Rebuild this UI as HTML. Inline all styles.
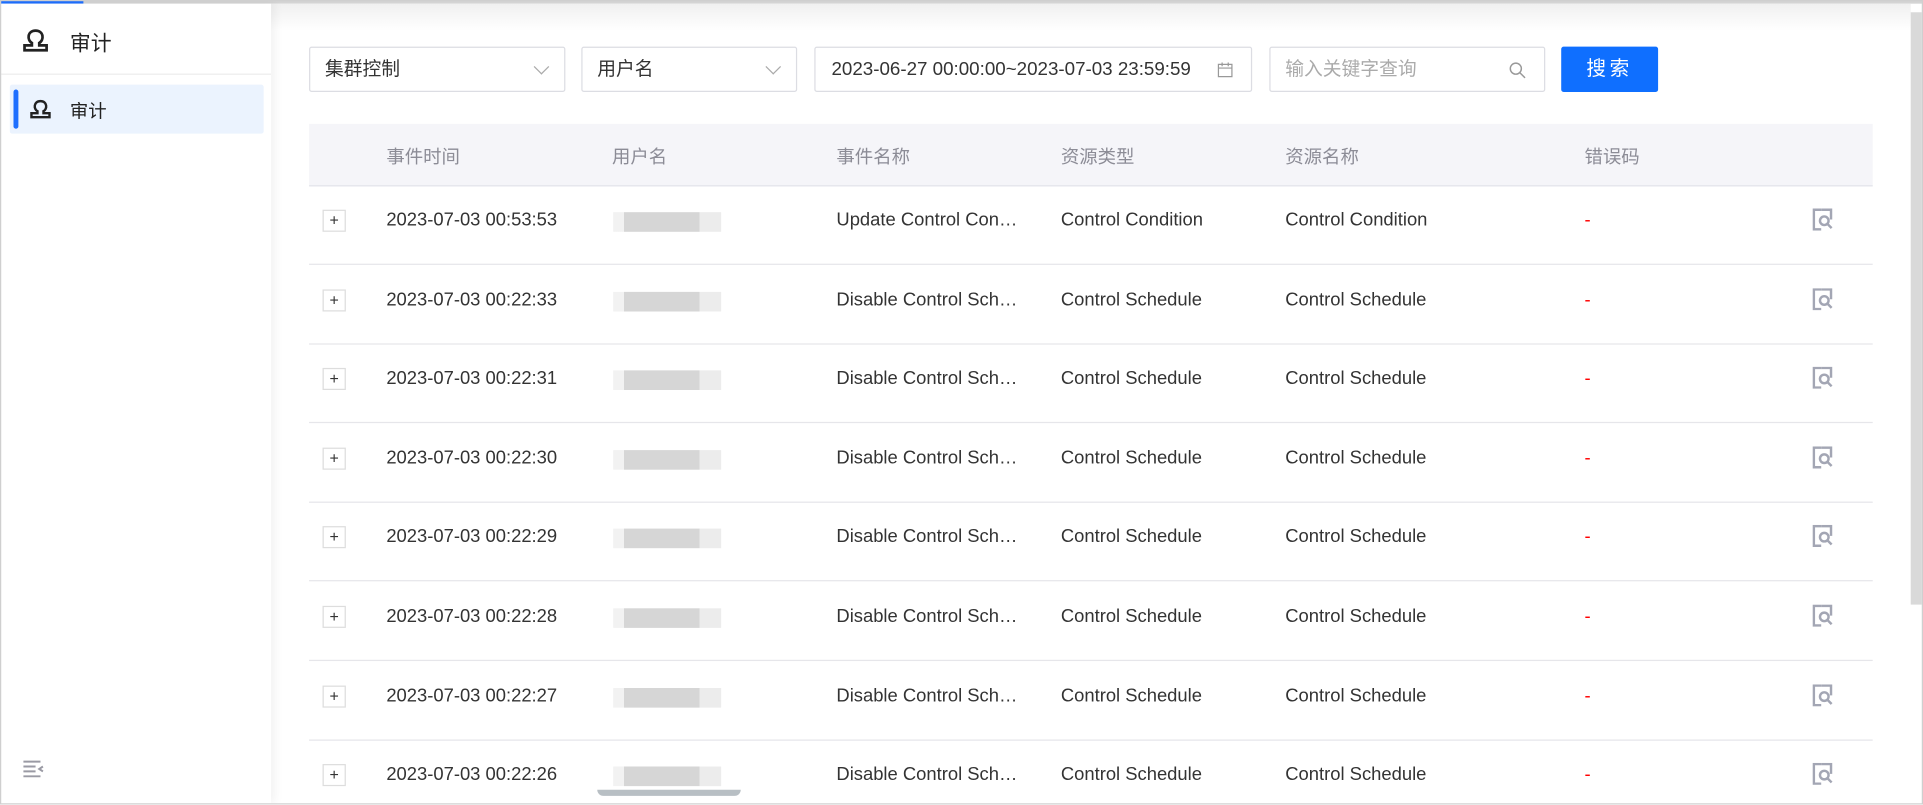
<!DOCTYPE html>
<html><head><meta charset="utf-8"><style>
html,body{margin:0;padding:0;width:1923px;height:804px;overflow:hidden;background:#fff}
#w{position:absolute;left:0;top:0;width:1568px;height:656px;overflow:hidden;transform:scale(1.22640);transform-origin:0 0;font-family:"Liberation Sans","Noto Sans CJK SC",sans-serif;color:#333;font-size:15px}
.a{position:absolute}
.sel{position:absolute;top:38px;height:37px;border:1px solid #dcdde3;border-radius:2px;box-sizing:border-box;background:#fff;line-height:36px;padding-left:12px;font-size:15.3px}
.chev{position:absolute;right:14px;top:11px;width:8px;height:8px;border-right:1px solid #aaa;border-bottom:1px solid #aaa;transform:rotate(45deg)}
.hd{position:absolute;top:101px;left:252px;width:1275px;height:50px;background:#f5f5f9;border-bottom:1px solid #e3e4ea;color:#8c8c96;font-size:15px}
.hd span,.row span{position:absolute}
.hd span{top:16px}
.row{position:absolute;left:252px;width:1275px;height:64px;border-bottom:1px solid #e6e6ea}
.row span{top:20px;white-space:nowrap}
.plus{left:11px;top:20px!important;width:19px;height:18px;border:1px solid #ddd;box-sizing:border-box;text-align:center;line-height:15px;font-size:13px}
.blur{left:248px;top:22px!important;width:88px;height:16px;background:linear-gradient(90deg,#f2f2f2 0 10%,#d6d6d6 10% 80%,#ececec 80%)}
.red{color:#f00}
</style></head><body><div id="w">
<div class="a" style="left:0;top:0;width:1568px;height:3px;background:#d4d4d4"></div>
<div class="a" style="left:0;top:0;width:68px;height:3px;background:#1e6fff"></div>
<div class="a" style="left:221px;top:3px;width:1337px;height:22px;background:linear-gradient(#f0f0f0,#fff)"></div>
<div class="a" style="left:1px;top:3px;width:220px;height:652px;background:#fff;box-shadow:3px 0 8px rgba(0,0,0,.06)"></div>
<svg class="a" style="left:18px;top:22px" width="22" height="22" viewBox="0 0 22 22"><path d="M8 13 C4 11 4 3 11 3 C18 3 18 11 14 13 L14 15 L20 15 L20 19 L2 19 L2 15 L8 15 Z" fill="none" stroke="#222" stroke-width="2.2"/></svg>
<div class="a" style="left:57px;top:21px;font-size:17px;color:#222">审计</div>
<div class="a" style="left:1px;top:60px;width:220px;height:1px;background:#ececec"></div>
<div class="a" style="left:8px;top:69px;width:207px;height:40px;background:#ebf3fe;border-radius:2px"></div>
<div class="a" style="left:11px;top:73px;width:4px;height:32px;background:#1e6fff;border-radius:2px"></div>
<svg class="a" style="left:24px;top:80px" width="18" height="18" viewBox="0 0 22 22"><path d="M8 13 C4 11 4 3 11 3 C18 3 18 11 14 13 L14 15 L20 15 L20 19 L2 19 L2 15 L8 15 Z" fill="none" stroke="#222" stroke-width="2.4"/></svg>
<div class="a" style="left:57px;top:80px;font-size:15px;color:#222">审计</div>
<svg class="a" style="left:19px;top:619px" width="18" height="16" viewBox="0 0 18 16"><path d="M0 2H14M0 6H10M0 10H10M0 14H14M16 6L13 8L16 10" fill="none" stroke="#9a9aa4" stroke-width="1.6"/></svg>

<div class="sel" style="left:252px;width:209px">集群控制<i class="chev"></i></div>
<div class="sel" style="left:474px;width:176px">用户名<i class="chev"></i></div>
<div class="sel" style="left:664px;width:357px;padding-left:13px">2023-06-27 00:00:00~2023-07-03 23:59:59
<svg class="a" style="right:14px;top:11px" width="14" height="14" viewBox="0 0 14 14"><path d="M1.5 2.5H12.5V12.5H1.5ZM1.5 5.5H12.5M4.5 1V4M9.5 1V4" fill="none" stroke="#999" stroke-width="1"/></svg></div>
<div class="sel" style="left:1035px;width:225px;color:#aaa">输入关键字查询
<svg class="a" style="right:14px;top:11px" width="15" height="15" viewBox="0 0 15 15"><circle cx="6" cy="6" r="4.5" fill="none" stroke="#999" stroke-width="1.2"/><path d="M9.5 9.5L13.5 13.5" stroke="#999" stroke-width="1.2"/></svg></div>
<div class="a" style="left:1273px;top:38px;width:79px;height:37px;background:#0f6fff;border-radius:2px;color:#fff;text-align:center;line-height:37px;font-size:16px;letter-spacing:3px">搜索</div>

<div class="hd"><span style="left:63px">事件时间</span><span style="left:247px">用户名</span><span style="left:430px">事件名称</span><span style="left:613px">资源类型</span><span style="left:796px">资源名称</span><span style="left:1040px">错误码</span></div>

<div id="rows"></div>
<div class="a" style="left:1558px;top:10px;width:9px;height:483px;background:#d9d9d9"></div>
<div class="a" style="left:487px;top:644px;width:117px;height:5px;background:#b8bfc4;border-radius:0 0 40px 40px"></div>
<div class="a" style="left:0;top:0;width:1568px;height:656px;border:1px solid #cfcfcf;box-sizing:border-box"></div>
</div>
<script>
var t=["00:53:53","00:22:33","00:22:31","00:22:30","00:22:29","00:22:28","00:22:27","00:22:26"],h="";
for(var i=0;i<8;i++){var y=151+i*64.6;var up=i==0;var ev=up?"Update Control Con…":"Disable Control Sch…";var r=up?"Control Condition":"Control Schedule";
h+='<div class="row" style="top:'+y+'px"><span class="plus">+</span><span style="left:63px">2023-07-03 '+t[i]+'</span><span class="blur"></span><span style="left:430px">'+ev+'</span><span style="left:613px">'+r+'</span><span style="left:796px">'+r+'</span><span class="red" style="left:1040px">-</span>'+
'<svg style="position:absolute;left:1226px;top:19px" width="17" height="18" viewBox="0 0 17 18"><path d="M7 1H1V17H7" fill="none" stroke="#a3a6b4" stroke-width="2"/><path d="M7 1H15V9" fill="none" stroke="#a3a6b4" stroke-width="2"/><circle cx="9.5" cy="10" r="3.5" fill="none" stroke="#a3a6b4" stroke-width="2"/><path d="M12 12.5L15.5 16" stroke="#a3a6b4" stroke-width="2"/></svg></div>';}
document.getElementById("rows").innerHTML=h;
</script>
</body></html>
